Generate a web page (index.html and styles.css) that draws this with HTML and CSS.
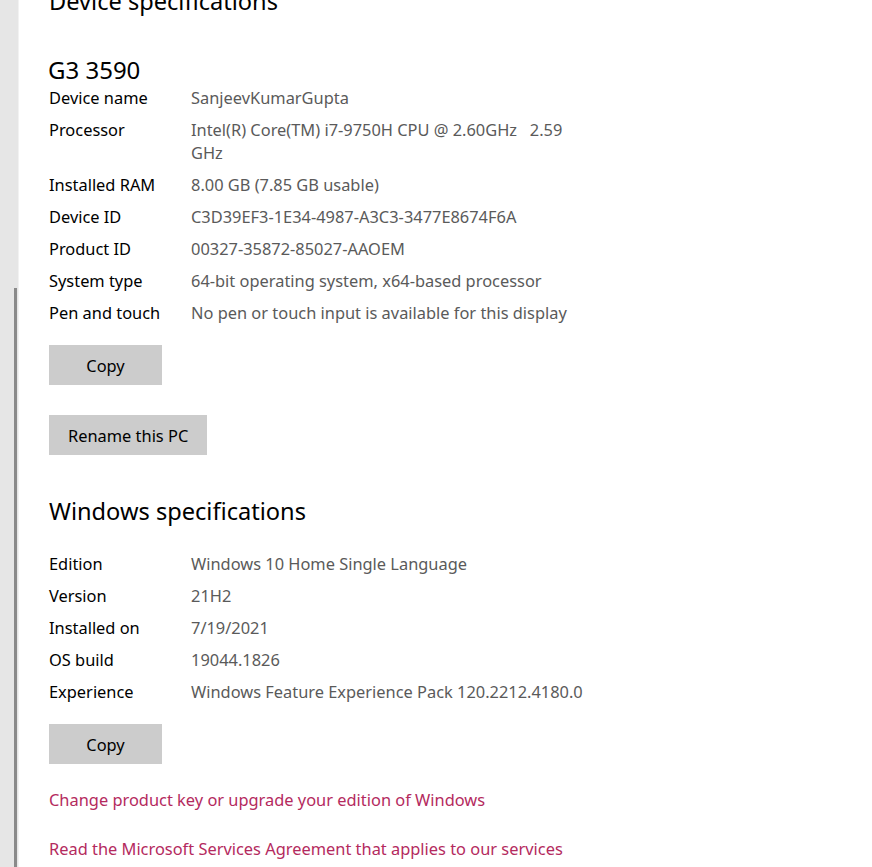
FILE: index.html
```html
<!DOCTYPE html>
<html lang="en">
<head>
<meta charset="utf-8">
<title>About</title>
<link rel="stylesheet" href="styles.css">
</head>
<body>
<div class="window">
  <div class="rail"><div class="thumb"></div></div>
  <main class="main">
    <h2 class="section-title cut">Device specifications</h2>
    <h1 class="model">G3 3590</h1>
    <dl class="specs">
      <div class="row"><dt>Device name</dt><dd>SanjeevKumarGupta</dd></div>
      <div class="row"><dt>Processor</dt><dd>Intel(R) Core(TM) i7-9750H CPU @ 2.60GHz &nbsp; 2.59 GHz</dd></div>
      <div class="row"><dt>Installed RAM</dt><dd>8.00 GB (7.85 GB usable)</dd></div>
      <div class="row"><dt>Device ID</dt><dd>C3D39EF3-1E34-4987-A3C3-3477E8674F6A</dd></div>
      <div class="row"><dt>Product ID</dt><dd>00327-35872-85027-AAOEM</dd></div>
      <div class="row"><dt>System type</dt><dd>64-bit operating system, x64-based processor</dd></div>
      <div class="row"><dt>Pen and touch</dt><dd>No pen or touch input is available for this display</dd></div>
    </dl>
    <button class="btn copy">Copy</button>
    <button class="btn rename">Rename this PC</button>

    <h2 class="section-title win">Windows specifications</h2>
    <dl class="specs">
      <div class="row"><dt>Edition</dt><dd>Windows 10 Home Single Language</dd></div>
      <div class="row"><dt>Version</dt><dd>21H2</dd></div>
      <div class="row"><dt>Installed on</dt><dd>7/19/2021</dd></div>
      <div class="row"><dt>OS build</dt><dd>19044.1826</dd></div>
      <div class="row"><dt>Experience</dt><dd>Windows Feature Experience Pack 120.2212.4180.0</dd></div>
    </dl>
    <button class="btn copy">Copy</button>
    <a class="link" href="#">Change product key or upgrade your edition of Windows</a>
    <a class="link" href="#">Read the Microsoft Services Agreement that applies to our services</a>
  </main>
</div>
</body>
</html>
```
FILE: styles.css
```css
html, body {
  margin: 0;
  padding: 0;
  background: #ffffff;
  height: 100%;
  overflow: hidden;
}

body {
  font-family: "Noto Sans", "Open Sans", "Liberation Sans", sans-serif;
  color: #000000;
}

.window {
  display: flex;
  height: 867px;
}

.rail {
  width: 19px;
  flex: none;
  background: #e6e6e6;
  position: relative;
  border-right: 1px solid #f2f2f2;
  box-sizing: border-box;
}

.thumb {
  position: absolute;
  left: 14px;
  top: 288px;
  width: 3px;
  bottom: 0;
  background: #8a8a8a;
}

.main {
  flex: 1;
  padding-left: 30px;
  display: flex;
  flex-direction: column;
  align-items: flex-start;
}

.section-title {
  font-weight: 400;
  font-size: 23.6px;
  line-height: 30px;
  margin: 0;
  color: #000;
}

.cut {
  margin-top: -14px;
}

.model {
  font-weight: 400;
  font-size: 24px;
  line-height: 32px;
  margin: 38px 0 0 -1px;
}

.specs {
  margin: 0;
  padding: 0;
  display: flex;
  flex-direction: column;
  gap: 9px;
}

.row {
  display: flex;
  font-size: 16.4px;
  line-height: 23px;
}

.row dt {
  width: 142px;
  flex: none;
  color: #000;
}

.row dd {
  margin: 0;
  width: 392px;
  color: #5a5a5a;
}

.btn {
  font-family: inherit;
  font-size: 16.4px;
  border: none;
  background: #cccccc;
  color: #000;
  height: 40px;
  padding: 0 19px;
  margin: 0;
}

.btn.copy {
  width: 113px;
  margin-top: 21px;
}

.btn.rename {
  margin-top: 30px;
}

.win {
  margin-top: 41px;
  margin-bottom: 26px;
}

.link {
  color: #b42a5e;
  text-decoration: none;
  font-size: 16.4px;
  line-height: 23px;
}

.btn.copy + .link {
  margin-top: 24px;
}

.link + .link {
  margin-top: 26px;
}
```
